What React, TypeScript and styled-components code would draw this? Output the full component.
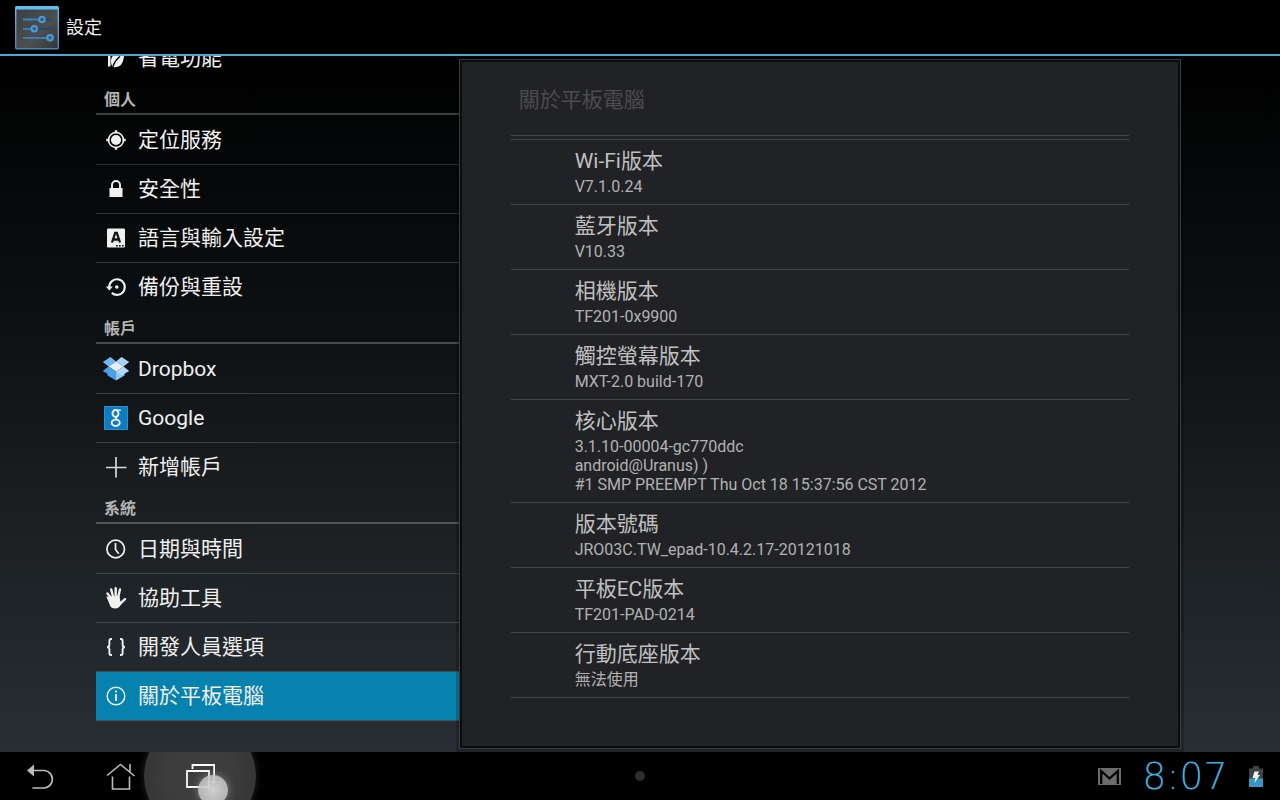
import React from "react";
import styled, { createGlobalStyle } from "styled-components";

const GlobalStyle = createGlobalStyle`
  *, *::before, *::after { box-sizing: border-box; }
  body {
    margin: 0;
    background: #000;
    color: #f0f0f0;
    font-family: Roboto, "Noto Sans CJK TC", sans-serif;
  }
  button { font: inherit; color: inherit; background: none; border: 0; padding: 0; }
  a { color: inherit; text-decoration: none; }
  h1, h2, h3, ul, dl, dt, dd { margin: 0; padding: 0; font-weight: 400; }
  ul { list-style: none; }
  svg { display: block; flex: none; }
`;

const Screen = styled.div`
  height: 100vh;
  display: grid;
  grid-template-rows: 56px minmax(0, 1fr) 48px;
`;

const ActionBar = styled.header`
  display: flex;
  align-items: center;
  gap: 6px;
  padding-left: 14px;
  background: #000;
  border-bottom: 2px solid #4ba9d3;
`;

const AppTitle = styled.h1`
  padding-top: 2px;
  font-size: 18px;
  line-height: 24px;
`;

const Content = styled.main`
  display: grid;
  grid-template-columns: minmax(0, 1fr) minmax(0, 2fr);
  padding: 0 96px;
  background: linear-gradient(#000, #0c0f11 35%, #1a1e21 64%, #282e33);
`;

const Sidebar = styled.nav`
  display: flex;
  flex-direction: column;
  justify-content: flex-end;
  overflow: hidden;
  padding-bottom: 31px;
`;

const SectionTitle = styled.h2`
  height: 33px;
  margin-bottom: 1px;
  padding: 6px 8px 0;
  border-bottom: 2px solid rgba(255, 255, 255, 0.24);
  color: #b4b4b4;
  font-size: 16px;
  line-height: 24px;
  font-weight: 700;
  flex: none;
`;

const SectionList = styled.ul`
  flex: none;
`;

const SectionItem = styled.li`
  & + & { border-top: 1px solid rgba(255, 255, 255, 0.17); }
  &:last-child[data-end="true"] { border-bottom: 1px solid rgba(255, 255, 255, 0.17); }
`;

const ItemLink = styled.a<{ $active?: boolean }>`
  display: flex;
  align-items: center;
  gap: 8px;
  height: 48px;
  padding-left: 6px;
  font-size: 21px;
  line-height: 30px;
  white-space: nowrap;
  background: ${(p) => (p.$active ? "#0782ae" : "transparent")};
`;

const Panel = styled.section`
  margin: 3px 3px 3px 0;
  padding: 0 51px;
  border: 1px solid #383b3d;
  outline: 3px solid rgba(0, 0, 0, 0.2);
  box-shadow: inset 0 0 0 2px #0b0c0d;
  background: #212225;
  overflow: hidden;
`;

const PanelTitle = styled.h2`
  height: 76px;
  padding: 24px 8px 0;
  border-bottom: 1px solid #44464a;
  color: #4c4c4e;
  font-size: 21px;
  line-height: 32px;
`;

const Details = styled.dl`
  margin-top: 3px;
  border-top: 1px solid #44464a;
`;

const Detail = styled.div`
  padding: 7px 64px 7px;
  border-bottom: 1px solid #44464a;
`;

const DetailName = styled.dt`
  padding-bottom: 2px;
  color: #c0c0c0;
  font-size: 21px;
  line-height: 28px;
`;

const DetailValue = styled.dd`
  padding-bottom: 1px;
  color: #b2b2b2;
  font-size: 16px;
  line-height: 19px;
  white-space: pre-line;
`;

const SystemBar = styled.footer`
  display: grid;
  grid-template-columns: 1fr auto 1fr;
  align-items: center;
  background: #000;
  overflow: hidden;
`;

const NavKeys = styled.div`
  display: flex;
`;

const NavKey = styled.button<{ $pressed?: boolean }>`
  position: relative;
  display: grid;
  place-items: center;
  width: 80px;
  height: 48px;
  ${(p) =>
    p.$pressed &&
    `
    &::before {
      content: "";
      position: absolute;
      left: 50%;
      top: 50%;
      width: 112px;
      height: 112px;
      margin: -56px;
      border-radius: 50%;
      background: radial-gradient(circle, #3c3d3c 40%, #2e312e 100%);
      box-shadow: 0 0 8px #1c1f1c;
    }
  `}
  & > svg { position: relative; }
`;

const TouchSpot = styled.span`
  position: absolute;
  left: 38px;
  top: 23px;
  width: 30px;
  height: 30px;
  border-radius: 50%;
  background: radial-gradient(circle, rgba(215, 215, 215, 0.95), rgba(185, 185, 185, 0.85));
  box-shadow: 0 0 8px rgba(170, 170, 190, 0.6);
`;

const Dot = styled.span`
  width: 10px;
  height: 10px;
  border-radius: 50%;
  background: #2d2d2d;
`;

const Status = styled.div`
  display: flex;
  justify-content: flex-end;
  align-items: center;
  gap: 18px;
  padding-right: 17px;
`;

const Clock = styled.time`
  min-width: 92px;
  text-align: center;
  color: #3fb0e0;
  font-family: "DejaVu Sans Light", "DejaVu Sans", sans-serif;
  font-weight: 200;
  font-size: 38px;
  line-height: 48px;
`;

const Glyph = ({ children }: { children: React.ReactNode }) => (
  <svg width="28" height="28" viewBox="0 0 28 28" fill="none" stroke="#f0f0f0" strokeWidth="1.6" aria-hidden="true">
    {children}
  </svg>
);

const PowerIcon = () => (
  <Glyph>
    <path d="M6 7h5v3H8.500V22.500H6z" fill="#f0f0f0" stroke="none" />
    <path d="M22.500 7C15 8 9.500 10.500 9 16.500c-.2 2.500.5 4.500 1.500 6.500 7.500 1.300 11.500-2.500 12-16z" fill="#f0f0f0" stroke="none" />
    <path d="M10.500 24c1.500-5.500 3.500-8.500 7.500-11.500" stroke="#050606" strokeWidth="1.500" />
  </Glyph>
);
const LocationIcon = () => (
  <Glyph>
    <circle cx="14" cy="14" r="7.500" strokeWidth="1.600" />
    <circle cx="14" cy="14" r="5" fill="#f0f0f0" stroke="none" />
    <path d="M14 4.300v3M14 20.700v3M4.300 14h3M20.700 14h3" strokeWidth="2.400" />
  </Glyph>
);
const LockIcon = () => (
  <Glyph>
    <rect x="7.500" y="13" width="13" height="9" fill="#f0f0f0" stroke="none" />
    <path d="M10 13.500V10a4 4 0 0 1 8 0v3.500" strokeWidth="1.900" />
  </Glyph>
);
const LanguageIcon = () => (
  <Glyph>
    <rect x="5" y="4.500" width="18" height="19" rx="1" fill="#f0f0f0" stroke="none" />
    <path d="M10 18.500 13.200 9h1.600L18 18.500M11.500 15.500h5" stroke="#111416" strokeWidth="2.300" />
    <path d="M14 21.800h1.700M17 21.800h1.700M20 21.800h1.700" stroke="#111416" strokeWidth="1.500" />
  </Glyph>
);
const BackupIcon = () => (
  <Glyph>
    <path d="M7.200 14a7.800 7.800 0 1 1 2.600 5.900" strokeWidth="2.100" />
    <path d="M3.800 13.500h7L7.300 17.500z" fill="#f0f0f0" stroke="none" />
    <circle cx="14.800" cy="14" r="1.800" fill="#f0f0f0" stroke="none" />
  </Glyph>
);
const DropboxIcon = () => (
  <Glyph>
    <g stroke="none">
      <path d="M5.500 17.500 14 16.500V25.500L5.500 20.500z" fill="#4a9ee6" />
      <path d="M14 16.500 22.500 17.500V20.500L14 25.500z" fill="#8cc6f2" />
      <path d="M.8 7 8.500 2 14 6.500 6.500 11.500z" fill="#6db8f3" />
      <path d="M27.200 7 19.500 2 14 6.500 21.500 11.500z" fill="#a6d4f8" />
      <path d="M6.500 11.500 14 6.500 21.500 11.500 14 16.500z" fill="#e2f1fd" />
      <path d="M.8 16 6.500 11.500 14 16.500 8.500 20.500z" fill="#4f9fe8" />
      <path d="M27.200 16 21.500 11.500 14 16.500 19.500 20.500z" fill="#b4dafa" />
    </g>
  </Glyph>
);
const GoogleIcon = () => (
  <Glyph>
    <rect x="2.500" y="2.500" width="23" height="23" fill="#0e7cc0" stroke="#2b8fcd" strokeWidth="1" />
    <ellipse cx="13.500" cy="9.500" rx="3" ry="3.400" strokeWidth="2" />
    <ellipse cx="13.700" cy="18.800" rx="4" ry="3.200" strokeWidth="1.900" />
    <path d="M14.500 6.300h4.300M15.500 12.500c-2.500 1-2 2 .5 3.700" strokeWidth="1.500" />
  </Glyph>
);
const AddIcon = () => (
  <Glyph><path d="M4 14.500h20.500M14 4v20.500" stroke="#d8d8d8" strokeWidth="1.700" /></Glyph>
);
const ClockIcon = () => (
  <Glyph>
    <circle cx="13.700" cy="14" r="8.800" strokeWidth="1.700" />
    <path d="M13.500 8v6.500l3.300 4.300" strokeWidth="1.700" />
  </Glyph>
);
const HandIcon = () => (
  <Glyph>
    <g strokeLinecap="round" strokeWidth="2.400">
      <path d="M9 14 5.500 9.500M11 12.500 9.200 5.500M13.700 12V4.200M16.300 12.500 18 5.500M18.500 19.500l4.500-4.300" />
    </g>
    <path d="M4.300 12.500 8 13l9.500-1.500.8 6 2.200-1.300L22.500 16 18 22c-1 1.600-2.500 2.500-4.500 2.500-3.500 0-5.300-1.500-6-4.500z" fill="#f0f0f0" stroke="none" />
  </Glyph>
);
const BracesIcon = () => (
  <Glyph>
    <path d="M10 6H9Q7.400 6 7.400 8v3.500Q7.400 14 5 14q2.400 0 2.400 2.500V20Q7.400 22 9 22h1M18 6h1q1.600 0 1.600 2v3.500Q20.600 14 23 14q-2.400 0-2.400 2.500V20q0 2-1.600 2h-1" strokeWidth="1.900" />
  </Glyph>
);
const InfoIcon = () => (
  <Glyph>
    <circle cx="14" cy="14" r="8.800" strokeWidth="1.500" />
    <path d="M14 12v7M14 8.500v2" strokeWidth="1.800" />
  </Glyph>
);

const SettingsLogo = () => (
  <svg width="46" height="46" viewBox="0 0 46 46" fill="none" aria-hidden="true">
    <defs>
      <linearGradient id="tile" x1="0" y1="0" x2="1" y2="1">
        <stop offset="0" stopColor="#3c3f41" />
        <stop offset="0.600" stopColor="#4c4e4f" />
        <stop offset="1" stopColor="#323436" />
      </linearGradient>
      <linearGradient id="edge" x1="0" y1="0" x2="0" y2="1">
        <stop offset="0" stopColor="#5cbdee" />
        <stop offset="1" stopColor="#4386b4" />
      </linearGradient>
    </defs>
    <rect x="1.700" y="2.700" width="42.600" height="42" rx="1" fill="url(#tile)" stroke="url(#edge)" strokeWidth="1.400" />
    <path d="M2 3.800h42" stroke="#5fbfee" strokeWidth="3.200" />
    <path d="M9 15.500h29M9 24.800h29M9 33.800h29" stroke="#234a6a" strokeWidth="2" />
    <path d="M9 15.500h18M9 24.800h10M9 33.800h26" stroke="#3f86b8" strokeWidth="1.800" />
    <g fill="#2f5f85" stroke="#4b9bd0" strokeWidth="2">
      <circle cx="28" cy="15.500" r="2.800" />
      <circle cx="20.300" cy="24.800" r="2.800" />
      <circle cx="36" cy="33.800" r="2.800" />
    </g>
  </svg>
);

const BackIcon = () => (
  <svg width="30" height="30" viewBox="0 0 30 30" fill="none" aria-hidden="true">
    <path d="M2 9.500 9 3.500v12z" fill="#b9bdb9" />
    <path d="M8 9.500h11.500a8.800 8.800 0 0 1 0 17.500H7.500" stroke="#b9bdb9" strokeWidth="1.700" />
  </svg>
);
const HomeIcon = () => (
  <svg width="30" height="30" viewBox="0 0 30 30" fill="none" stroke="#b9bdb9" strokeWidth="1.600" aria-hidden="true">
    <path d="M2 14.500 15.500 3.500l14 11.500M25 10.500V3M7.500 15.500V28h17V15.500" />
  </svg>
);
const RecentsIcon = () => (
  <svg width="30" height="30" viewBox="0 0 30 30" fill="none" stroke="#fafafa" strokeWidth="1.800" aria-hidden="true">
    <path d="M2 10h22v16H2zM7.500 8V4H29.100v17H26.500" />
  </svg>
);
const MailIcon = () => (
  <svg width="23" height="17" viewBox="0 0 23 17" fill="none" role="img" aria-label="Gmail">
    <path d="M0 0h23v17H0z" fill="#6b6d6b" />
    <path d="M3.200 16V3l8.300 7.500L19.800 3v13" stroke="#050505" strokeWidth="2.300" />
  </svg>
);
const BatteryIcon = () => (
  <svg width="14" height="21" viewBox="0 0 14 21" role="img" aria-label="Battery charging">
    <path d="M4 0h6v2.500h4V21H0V2.500h4z" fill="#404343" />
    <path d="M0 12.500h14V21H0z" fill="#3497c4" />
    <path d="M5.500 5.500H10L8.500 9H11L5.500 17 6.300 12H3.500z" fill="#f4f4f4" />
  </svg>
);

type Entry = { label: string; Icon: () => React.JSX.Element; active?: boolean };
const sections: { title?: string; items: Entry[] }[] = [
  { items: [{ label: "省電功能", Icon: PowerIcon }] },
  {
    title: "個人",
    items: [
      { label: "定位服務", Icon: LocationIcon },
      { label: "安全性", Icon: LockIcon },
      { label: "語言與輸入設定", Icon: LanguageIcon },
      { label: "備份與重設", Icon: BackupIcon },
    ],
  },
  {
    title: "帳戶",
    items: [
      { label: "Dropbox", Icon: DropboxIcon },
      { label: "Google", Icon: GoogleIcon },
      { label: "新增帳戶", Icon: AddIcon },
    ],
  },
  {
    title: "系統",
    items: [
      { label: "日期與時間", Icon: ClockIcon },
      { label: "協助工具", Icon: HandIcon },
      { label: "開發人員選項", Icon: BracesIcon },
      { label: "關於平板電腦", Icon: InfoIcon, active: true },
    ],
  },
];

const details = [
  ["Wi-Fi版本", "V7.1.0.24"],
  ["藍牙版本", "V10.33"],
  ["相機版本", "TF201-0x9900"],
  ["觸控螢幕版本", "MXT-2.0 build-170"],
  ["核心版本", "3.1.10-00004-gc770ddc\nandroid@Uranus) )\n#1 SMP PREEMPT Thu Oct 18 15:37:56 CST 2012"],
  ["版本號碼", "JRO03C.TW_epad-10.4.2.17-20121018"],
  ["平板EC版本", "TF201-PAD-0214"],
  ["行動底座版本", "無法使用"],
];

export default function App() {
  return (
    <Screen lang="zh-Hant">
      <GlobalStyle />
      <ActionBar>
        <SettingsLogo />
        <AppTitle>設定</AppTitle>
      </ActionBar>
      <Content>
        <Sidebar>
          {sections.map((section, i) => (
            <React.Fragment key={i}>
              {section.title && <SectionTitle>{section.title}</SectionTitle>}
              <SectionList>
                {section.items.map(({ label, Icon, active }) => (
                  <SectionItem key={label} data-end={i === sections.length - 1}>
                    <ItemLink href="#" $active={active} aria-current={active ? "page" : undefined}>
                      <Icon />
                      {label}
                    </ItemLink>
                  </SectionItem>
                ))}
              </SectionList>
            </React.Fragment>
          ))}
        </Sidebar>
        <Panel>
          <PanelTitle>關於平板電腦</PanelTitle>
          <Details>
            {details.map(([name, value]) => (
              <Detail key={name}>
                <DetailName>{name}</DetailName>
                <DetailValue>{value}</DetailValue>
              </Detail>
            ))}
          </Details>
        </Panel>
      </Content>
      <SystemBar>
        <NavKeys>
          <NavKey aria-label="返回"><BackIcon /></NavKey>
          <NavKey aria-label="主畫面"><HomeIcon /></NavKey>
          <NavKey aria-label="最近使用的應用程式" $pressed>
            <RecentsIcon />
            <TouchSpot />
          </NavKey>
        </NavKeys>
        <Dot />
        <Status>
          <MailIcon />
          <Clock>8:07</Clock>
          <BatteryIcon />
        </Status>
      </SystemBar>
    </Screen>
  );
}
